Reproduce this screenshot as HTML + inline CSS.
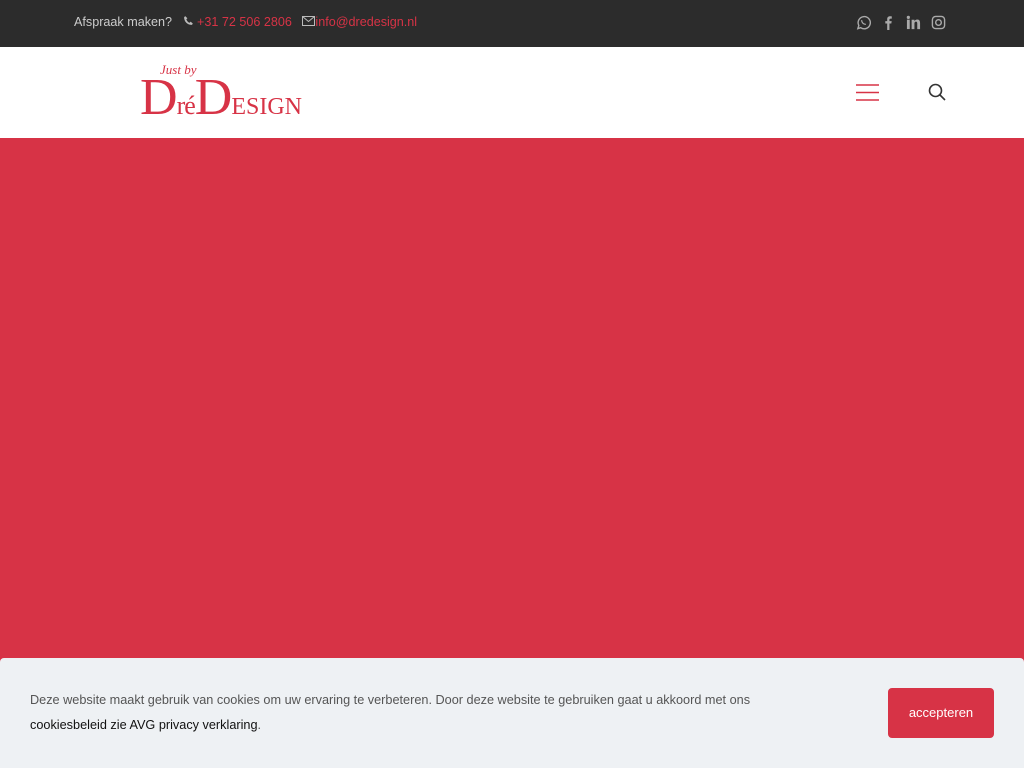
<!DOCTYPE html>
<html><head><meta charset="utf-8"><style>
*{margin:0;padding:0;box-sizing:border-box}
body{width:1024px;height:768px;overflow:hidden;font-family:"Liberation Sans",sans-serif;background:#d73346;position:relative}
.top{height:47px;background:#2c2c2c;position:relative;font-size:12.6px;color:#ccc}
.top .l{position:absolute;left:74px;top:15px;white-space:nowrap}
.top a{color:#d73346;text-decoration:none}
.soc{position:absolute;right:78px;top:15px;display:flex;gap:10px}
.soc svg{width:15px;height:15px;fill:none;stroke:#aaa;stroke-width:1.5}
.hdr{height:91px;background:#fff;position:relative}
.cookie{position:absolute;left:0;top:658px;width:1024px;height:110px;background:#eef1f4;border-radius:4px 4px 0 0}
.btn{position:absolute;left:888px;top:688px;width:106px;height:50px;background:#d73346;color:#fff;font-size:13px;border-radius:4px;text-align:center;line-height:50px}
</style></head><body>
<div class="top"><div class="l">Afspraak maken? &nbsp;&nbsp;<svg width="11" height="11" viewBox="0 0 10 10"><path d="M2 1l2 2-1 1c1 2 2 3 3 3l1-1 2 2-1 1C4 9 1 6 1 2z" fill="#bbb"/></svg> <a>+31 72 506 2806</a> &nbsp;&nbsp;<svg width="13" height="10" viewBox="0 0 13 10"><rect x=".5" y=".5" width="12" height="9" fill="none" stroke="#bbb"/><path d="M.5.5l6 5 6-5" fill="none" stroke="#bbb"/></svg><a>info@dredesign.nl</a></div>
<div class="soc">
<svg viewBox="0 0 16 16"><path d="M2 14.5l1-3.3A6.5 6.5 0 1 1 5 13.5z"/><path d="M6 5.5c0 2.5 2 4.5 4.5 4.5" stroke-width="1.3"/></svg>
<svg viewBox="0 0 16 16" style="stroke:none;fill:#aaa"><path d="M9 16V9h2l.4-2.5H9V5c0-.7.3-1.2 1.3-1.2h1.2V1.5C11 1.4 10.3 1.3 9.6 1.3 7.8 1.3 6.6 2.4 6.6 4.4v2.1H4.6V9h2v7z"/></svg>
<svg viewBox="0 0 16 16" style="stroke:none;fill:#aaa"><rect x="1" y="5" width="3" height="10"/><circle cx="2.5" cy="2.5" r="1.7"/><path d="M6 5h3v1.5c.6-1 1.7-1.7 3-1.7 2.3 0 3 1.5 3 3.8V15h-3V9c0-1.2-.3-2-1.4-2S9 8 9 9v6H6z"/></svg>
<svg viewBox="0 0 16 16"><rect x="1.5" y="1.5" width="13" height="13" rx="3.5"/><circle cx="8" cy="8" r="3"/></svg>
</div></div>
<div class="hdr">
<div style="position:absolute;left:140px;top:15px">
<div style="font-family:'Liberation Serif',serif;font-style:italic;color:#d73346;font-size:13px;position:absolute;left:20px;top:0;white-space:nowrap">Just by</div>
<div style="font-family:'Liberation Serif',serif;color:#d73346;position:absolute;left:0;top:12px;white-space:nowrap;letter-spacing:-1px"><span style="font-size:52px;line-height:48px">D</span><span style="font-size:26px">ré</span><span style="font-size:52px;line-height:48px">D</span><span style="font-size:24px;letter-spacing:0">ESIGN</span></div>
</div>
<svg style="position:absolute;left:856px;top:37px" width="23" height="17"><path d="M0 1h23M0 8.5h23M0 16h23" stroke="#d73346" stroke-width="1.5"/></svg>
<svg style="position:absolute;left:928px;top:36px" width="18" height="18" fill="none" stroke="#333" stroke-width="1.6"><circle cx="7.5" cy="7.5" r="6"/><path d="M12 12l5 5"/></svg>
</div>
<div class="cookie"></div>
<p style="position:absolute;left:30px;top:688px;font-size:12.7px;color:#555;line-height:25px">Deze website maakt gebruik van cookies om uw ervaring te verbeteren. Door deze website te gebruiken gaat u akkoord met ons<br><span style="color:#111">cookiesbeleid zie AVG privacy verklaring</span>.</p>
<div class="btn">accepteren</div>
</body></html>
